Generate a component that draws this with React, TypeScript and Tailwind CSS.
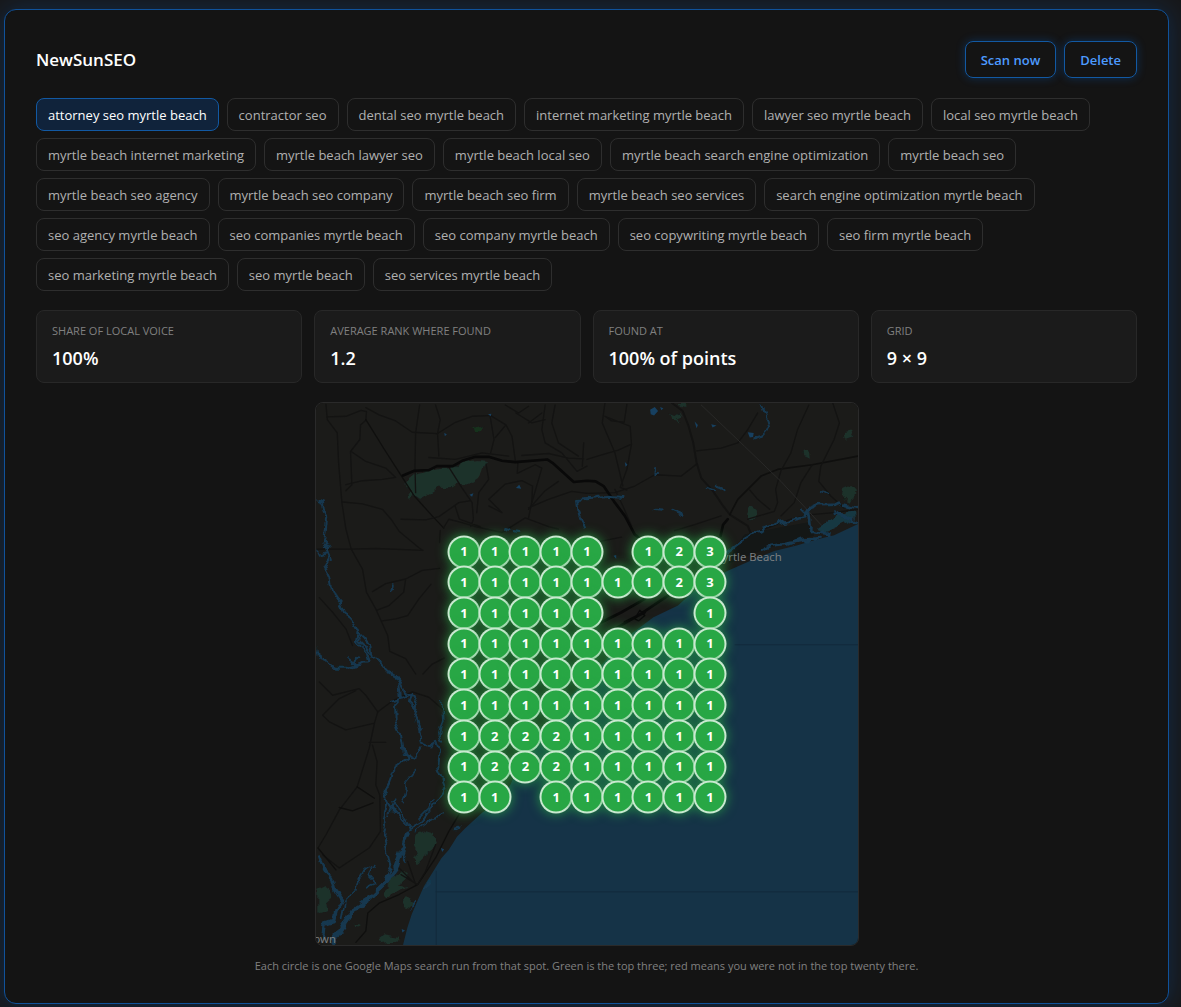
import { useState } from "react";

const KEYWORDS = [
  "attorney seo myrtle beach",
  "contractor seo",
  "dental seo myrtle beach",
  "internet marketing myrtle beach",
  "lawyer seo myrtle beach",
  "local seo myrtle beach",
  "myrtle beach internet marketing",
  "myrtle beach lawyer seo",
  "myrtle beach local seo",
  "myrtle beach search engine optimization",
  "myrtle beach seo",
  "myrtle beach seo agency",
  "myrtle beach seo company",
  "myrtle beach seo firm",
  "myrtle beach seo services",
  "search engine optimization myrtle beach",
  "seo agency myrtle beach",
  "seo companies myrtle beach",
  "seo company myrtle beach",
  "seo copywriting myrtle beach",
  "seo firm myrtle beach",
  "seo marketing myrtle beach",
  "seo myrtle beach",
  "seo services myrtle beach",
];

const STATS = [
  { label: "Share of local voice", value: "100%" },
  { label: "Average rank where found", value: "1.2" },
  { label: "Found at", value: "100% of points" },
  { label: "Grid", value: "9 × 9" },
];

// one string per grid row, "." where no pin is shown
const RANKS = [
  "11111.123",
  "111111123",
  "11111...1",
  "111111111",
  "111111111",
  "111111111",
  "122211111",
  "122211111",
  "11.111111",
];

// position of the first pin and distance between pins, in % of the map
const PIN_START = 27.4;
const PIN_STEP = 5.67;

function MapTiles() {
  return (
    <svg
      viewBox="0 0 1632 1632"
      className="block h-full w-full"
      fill="none"
      strokeLinecap="round"
      strokeLinejoin="round"
      aria-hidden="true"
    >
      <defs>
        {/* makes river banks and woodland edges meander */}
        <filter id="meander" filterUnits="userSpaceOnUse" x="0" y="0" width="1632" height="1632">
          <feTurbulence type="fractalNoise" baseFrequency="0.03" numOctaves="2" seed="4" />
          <feDisplacementMap
            in="SourceGraphic"
            scale="28"
            xChannelSelector="R"
            yChannelSelector="G"
          />
        </filter>
      </defs>
      <rect width="1632" height="1632" fill="#1b1b19" />

      {/* ocean */}
      <path
        d="M1632 364L1560 398L1510 410L1450 428L1380 446L1310 474L1240 505L1150 555L1090 610L1016 645L930 710L850 800L760 890L680 980L620 1070L585 1150L540 1205L500 1234L450 1280L425 1305L400 1345L378 1370L350 1415L325 1455L305 1500L288 1540L275 1580L262 1632H1632Z"
        fill="#153347"
      />
      <path
        d="M362 1472H1632M362 1472V1632M1262 728H1632M362 1410V1470"
        stroke="#122a3b"
        strokeWidth="3"
      />

      {/* woodland */}
      <g fill="#1c302a" filter="url(#meander)">
        <path d="M270 236L300 212L360 200L410 196L440 178L480 172L512 174L500 196L488 232L470 244L430 240L412 254L370 252L350 270L318 290L298 276L284 294L274 292L292 268L276 254Z" />
        <path d="M474 72L490 68L502 76L496 86L478 84Z" fill="#16301f" />
        <path d="M1060 32L1084 40L1098 30L1104 44L1090 50L1098 62L1074 54Z" />
        <path d="M1086 0H1118L1108 12L1092 8Z" />
        <path d="M1586 84L1606 80L1618 104L1600 110L1588 98Z" />
        <path d="M1468 142L1488 150L1490 168L1470 160Z" />
        <path d="M1590 256L1612 246L1626 262L1618 290L1600 300L1586 282Z" />
        <path d="M1308 312L1324 322L1326 346L1308 350L1298 334Z" />
        <path d="M1512 372L1560 344L1606 324L1628 334L1610 356L1560 378L1526 392Z" fill="#173742" />
        <path d="M300 1300L322 1290L352 1300L360 1326L350 1350L326 1366L306 1388L296 1372L306 1350L294 1330Z" />
        <path d="M206 1440L238 1418L262 1408L274 1430L250 1450L276 1454L250 1470L212 1494L202 1474L222 1456Z" />
        <path d="M4 1466L26 1454L46 1470L52 1490L30 1510L36 1530L4 1538Z" />
        <path d="M258 1496L276 1494L292 1506L290 1518L268 1512Z" />
        <path d="M184 1610L214 1600L250 1608L240 1622L196 1626Z" />
        <path d="M110 1568L134 1570L126 1576L112 1574Z" />
      </g>

      {/* roads */}
      <g stroke="#131312" strokeWidth="4">
        <path d="M30 4L34 50L64 90L68 180L78 300L90 380L106 440L140 500L152 570L180 620L216 700L222 748L270 770L300 816" />
        <path d="M34 42L90 40L136 22L152 26L150 52L134 66L132 110L104 146L108 246L90 264" />
        <path d="M150 50L160 66L206 140L256 218L296 280L350 340L384 376" stroke="#0f0f0e" />
        <path d="M150 14L190 36L240 54L290 88L366 92L420 58L470 40L524 38" />
        <path d="M312 6L300 90L298 190L300 270M366 92L374 50L360 6M366 92L370 160" />
        <path d="M524 38L536 110L526 150M572 66L540 104M526 38L572 66L590 100L600 172" />
        <path d="M570 6L610 30L640 10M602 30L650 60L690 50M640 60L680 30" />
        <path d="M106 146L150 176L210 196L240 224M240 224L200 230L140 234L90 246" />
        <path d="M80 298L140 304L200 320L226 350L250 386L310 436L322 444M4 440H104L180 438L322 444" />
        <path d="M256 350L330 352L370 342L430 300L466 294M398 190L440 256L470 300L474 350L466 372M418 308L432 350L494 372" />
        <path d="M384 376L400 350L440 360L480 372L560 390L630 346L700 372L730 380M374 384L372 420" />
        <path d="M512 184L520 230L490 270L484 330M520 310L560 330L520 290L570 244L620 234L652 250L650 296L640 346" />
        <path d="M608 180L606 212M606 212L660 186L680 196L650 300M770 266L700 290L640 316M770 266L816 272M730 236L690 264L640 320" />
        <path d="M620 158L700 152L760 166L806 168M340 164L420 170L500 150L580 160M806 120L802 190M690 6L680 80L690 120L740 150L786 206L816 190" />
        <path d="M720 6L710 60L730 120L790 160" />
        <path d="M170 568L210 544L270 530L320 504L372 498M346 546L310 590L276 640L240 650L200 656M270 530L264 570L220 610L184 624" />
        <path d="M10 586L50 630L90 680L110 730M322 816L350 786L386 768" />
        {/* east */}
        <path d="M870 0L862 60L900 150L924 250M816 170L860 156L910 142L950 124L946 70L870 40M870 40L890 54L928 58L936 4M950 124L936 200L916 254L936 262" />
        <path d="M1072 0L1104 24L1122 70L1136 120L1146 180L1160 226L1196 266L1226 310L1246 336L1300 370L1312 400" strokeWidth="6" />
        <path d="M816 272L900 270L960 250L1020 216L1100 220L1146 184M1146 144L1220 136L1270 120L1300 80L1330 30" />
        <path d="M1246 336L1270 290L1340 220L1390 200L1494 186L1632 160" stroke="#0f0f0e" strokeWidth="5" />
        <path d="M1484 6L1450 80L1430 150L1400 204L1384 260L1390 300L1380 326L1300 350M1494 186L1460 240L1440 300L1400 340M1556 0L1576 60L1560 110L1520 190L1514 236L1550 280L1590 316" />
        <path d="M1306 262L1330 290L1366 320M900 260L924 310L950 370M1080 384L1140 366L1220 340M816 440L860 416L920 404" />
        <path d="M1300 404L1350 380L1430 350L1490 336L1560 330L1632 320" />
        {/* south west */}
        <path d="M10 840L50 880L130 860L150 880L186 930L176 964L90 984L40 960L20 940L70 890L120 866" />
        <path d="M186 930L232 896L290 870L340 886L390 930M176 964L160 1040L124 1156L70 1226L30 1300L6 1340M160 1022L210 1022M170 1030L184 1080L180 1150L192 1180L194 1290L160 1340L70 1400L20 1360" />
        <path d="M124 1156L176 1190M70 1218L110 1228L172 1204M6 1340L60 1406M430 1240L400 1290L360 1370L306 1450L250 1480L190 1506L156 1536L150 1590L120 1624" stroke="#0f0f0e" />
        <path d="M276 1380L300 1450M250 1400L290 1440M256 1420L306 1450L330 1410L360 1330" />
      </g>
      <path
        d="M262 218L296 204L340 202L364 190L412 190L440 174L480 162L520 162L560 174L600 178L696 170L712 180L776 238L816 234L842 236L866 250L900 300L930 340L960 396L990 420"
        stroke="#090909"
        strokeWidth="8"
      />
      {/* built-up strip along the shore */}
      <path
        d="M1290 396L1400 374L1480 360L1500 400L1400 424L1310 456L1240 484L1260 440Z"
        fill="#141716"
      />
      <path
        d="M1240 350L1226 366L1218 400M860 660L920 630L990 590M900 680L970 640L1060 580M930 660L990 630"
        stroke="#0a0a0a"
        strokeWidth="8"
      />
      <path d="M960 650L975 624L990 640L972 656Z" stroke="#0a0a0a" strokeWidth="4" />
      <path d="M1160 6L1290 130L1400 236L1520 366" stroke="#292928" strokeWidth="3" />

      {/* rivers and lakes */}
      <g stroke="#163850" strokeWidth="6" filter="url(#meander)">
        <path d="M4 292L18 298L22 324L34 346L28 390L24 420L38 440L46 460L34 474L26 492L40 520L44 550L56 580L72 600L84 630L106 646L122 680L134 700L126 712L150 736L164 760L186 776L208 800L230 812L256 850L270 876L290 884L304 910L298 946L310 980L318 1024L340 1034L362 1020L372 1050L368 1100L380 1126L390 1160L366 1190L340 1230L320 1260L284 1280" />
        <path d="M4 444L12 460L40 452L48 470M4 740L10 770L36 780L60 800L90 800L120 790L158 780L150 750L120 716L126 690L146 710L164 730L166 764M96 768L122 790M130 766L108 784" />
        <path d="M232 816L250 844L256 890L238 910L240 960L256 1000L264 1050L280 1070L256 1090L228 1110L222 1140L206 1170L216 1200L204 1250L214 1290L204 1320L216 1370L222 1400L210 1430" />
        <path d="M224 900L262 890L286 878L280 900L300 920M264 1056L300 1070L316 1040M210 1194L230 1224L260 1260L284 1282" />
        <path d="M240 1190L220 1240M232 1200L256 1240L284 1280M300 1104L270 1140L272 1170L260 1200M378 900L382 950L370 996L378 1020M350 1190L340 1220L310 1250M380 1240L340 1260L300 1290" strokeWidth="5" />
        <path d="M276 1290L262 1340L240 1400L206 1446L160 1490L120 1516L90 1560L50 1620" strokeWidth="13" />
        <path d="M8 1366L24 1404L50 1430L60 1466L80 1496L60 1530L54 1560L24 1570L20 1610" strokeWidth="10" />
        <path d="M180 1390L150 1400L126 1440L120 1470L90 1500L80 1550M170 1396L160 1424L180 1446L150 1460M256 1356L274 1380" strokeWidth="5" />
        <path d="M228 546L224 566L230 560M816 288L786 292L790 320L800 350L810 372M816 290L880 282L926 286M1342 4L1360 50L1364 76L1344 98L1320 106M1018 190L1016 214L1030 214" />
        <path d="M1236 450L1290 410L1330 386L1400 360L1470 344L1482 320L1510 308L1560 306L1580 300M1482 330L1486 370L1500 386L1540 394M1556 330L1590 340L1626 356M1590 306L1630 316M1340 446L1370 430L1440 420L1510 408" strokeWidth="8" />
        <path d="M1416 430L1460 412L1520 406M1560 322L1610 350M1520 262L1536 270M1480 340L1460 320" />
        <path d="M1180 256L1198 262M1206 252L1230 262M1020 322L1040 324M1070 322L1104 336M570 380L580 382M590 386L612 388M340 1440L322 1460M300 1500L290 1520M424 1280L434 1276" strokeWidth="7" />
      </g>
      <g fill="#174060">
        <path d="M1006 20L1020 12L1030 24L1018 38L1008 34ZM1036 12L1046 16L1040 22ZM1140 56L1150 66L1146 76ZM1190 64L1206 68L1194 74ZM1300 88L1318 90L1316 102L1306 104ZM930 178L938 186L932 192Z" />
        <path d="M518 34L528 32L526 40ZM386 90L394 94L388 100ZM602 256L612 246L618 258ZM462 276L474 272L470 282ZM376 1340L386 1344L380 1352ZM258 1584L268 1588L260 1594ZM896 460L904 458L904 470Z" />
      </g>

      <g
        fill="#7a7e80"
        fontFamily="'Noto Sans', 'Open Sans', sans-serif"
        fontSize="34"
        textAnchor="end"
      >
        <text x="1402" y="475">Myrtle Beach</text>
        <text x="60" y="1626">own</text>
      </g>
    </svg>
  );
}

function RankMap() {
  return (
    <div className="relative mx-auto mt-[19px] aspect-square w-full max-w-[544px] overflow-hidden rounded-lg border border-[#2a2a2a]">
      <MapTiles />
      {RANKS.map((row, y) =>
        row.split("").map((rank, x) =>
          rank === "." ? null : (
            <span
              key={`${x}-${y}`}
              className="absolute flex size-[33px] -translate-x-1/2 -translate-y-1/2 items-center justify-center rounded-full border-2 border-white/75 bg-[#28a745] text-[13px] font-bold text-white shadow-[0_0_12px_rgba(40,167,69,0.85)]"
              style={{
                left: `${PIN_START + x * PIN_STEP}%`,
                top: `${PIN_START + y * PIN_STEP}%`,
              }}
            >
              {rank}
            </span>
          )
        )
      )}
    </div>
  );
}

function ActionButton({ children }: { children: string }) {
  return (
    <button
      type="button"
      className="h-[37px] rounded-lg border border-[#1259a3] px-[15px] pt-0.5 text-[13px] font-semibold text-[#4d9bff] shadow-[0_0_10px_rgba(0,110,230,0.3)]"
    >
      {children}
    </button>
  );
}

export default function App() {
  const [active, setActive] = useState(KEYWORDS[0]);

  return (
    <div className="min-h-screen bg-[#17181a] pt-[9px] pr-3 pb-[2px] pl-1 font-['Open_Sans','Noto_Sans',sans-serif]">
      <main className="rounded-xl border border-[#10529a] bg-[#141414] px-[31px] pt-[31px] pb-[29px] shadow-[0_0_24px_rgba(0,110,230,0.22)]">
        <header className="flex items-center justify-between">
          <h2 className="text-[17px] leading-6 font-semibold text-white">NewSunSEO</h2>
          <div className="flex gap-2">
            <ActionButton>Scan now</ActionButton>
            <ActionButton>Delete</ActionButton>
          </div>
        </header>

        <div className="mt-5 flex flex-wrap gap-x-2 gap-y-[7px]">
          {KEYWORDS.map((keyword) => (
            <button
              key={keyword}
              type="button"
              onClick={() => setActive(keyword)}
              className={
                keyword === active
                  ? "h-[33px] rounded-lg border border-[#1259a3] bg-[#10233b] px-[11px] pt-0.5 text-[13px] text-white"
                  : "h-[33px] rounded-lg border border-[#2e2e2e] px-[11px] pt-0.5 text-[13px] text-[#b0b0b0]"
              }
            >
              {keyword}
            </button>
          ))}
        </div>

        <dl className="mt-[19px] grid grid-cols-4 gap-3">
          {STATS.map((stat) => (
            <div
              key={stat.label}
              className="rounded-lg border border-[#282828] bg-[#1b1b1b] px-[15px] pt-3 pb-[10px]"
            >
              <dt className="text-[11px] leading-4 text-[#808080] uppercase">{stat.label}</dt>
              <dd className="mt-[5px] text-lg leading-7 font-semibold text-white">{stat.value}</dd>
            </div>
          ))}
        </dl>

        <RankMap />

        <p className="mt-3 text-center text-[11px] leading-4 text-[#808080]">
          Each circle is one Google Maps search run from that spot. Green is the top three; red
          means you were not in the top twenty there.
        </p>
      </main>
    </div>
  );
}
